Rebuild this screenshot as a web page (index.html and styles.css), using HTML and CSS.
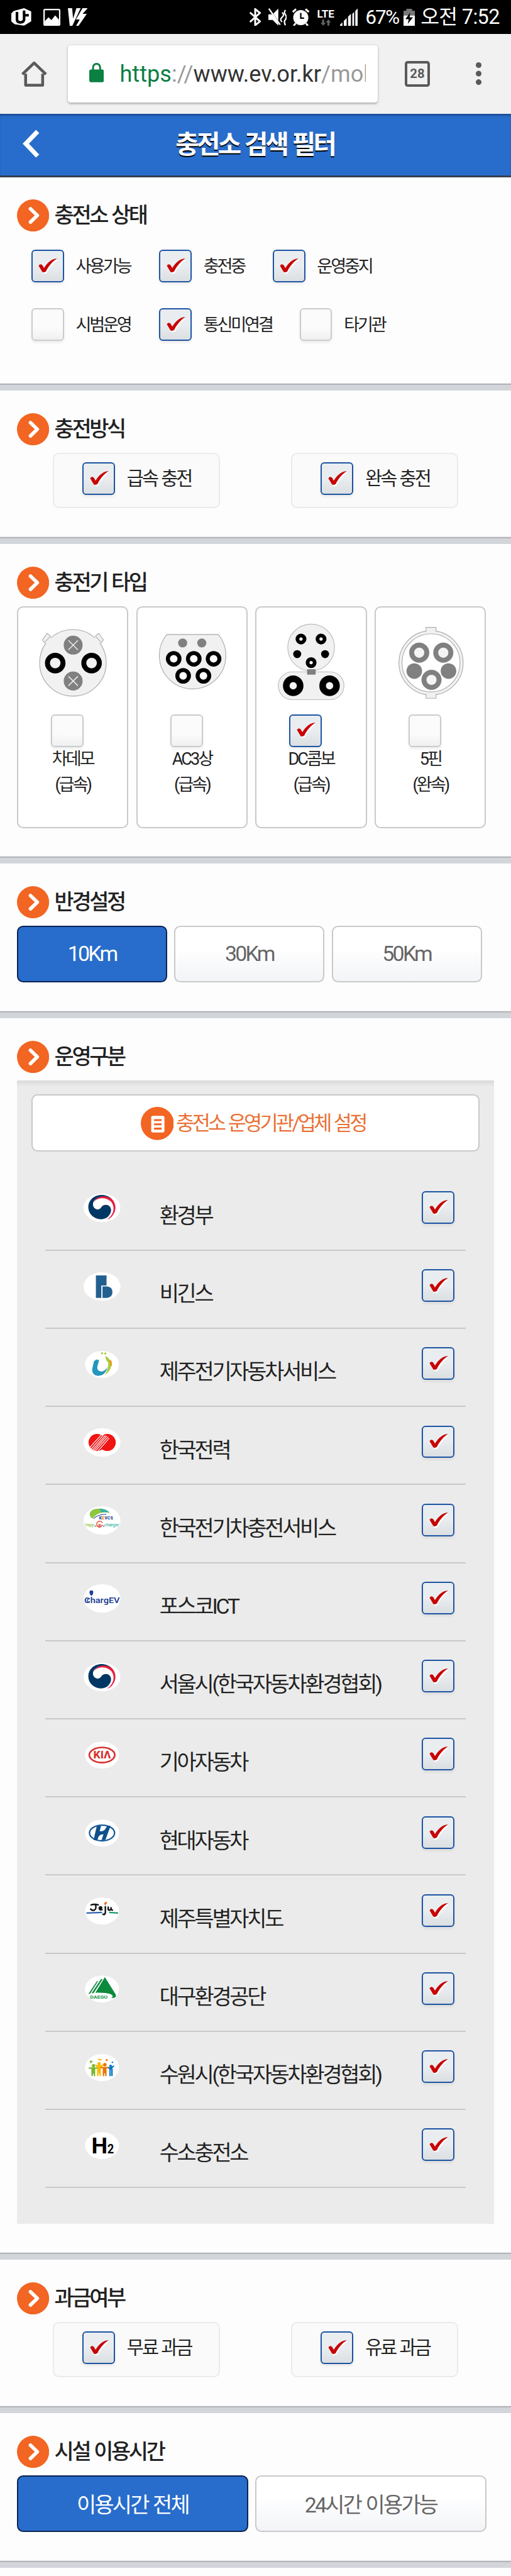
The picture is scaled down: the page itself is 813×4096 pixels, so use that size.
FILE: index.html
```html
<!DOCTYPE html>
<html lang="ko">
<head>
<meta charset="utf-8">
<title>충전소 검색 필터</title>
<link rel="stylesheet" href="styles.css">
</head>
<body>
<svg class="defs" width="0" height="0" aria-hidden="true">
  <symbol id="check" viewBox="0 0 69 69">
    <path fill="#fff" transform="translate(2 3)" d="M16.5 34q4-6 8-1l3.500 6C34 29 43 19.500 55.500 18.700 47 24 37 35 32 46q-6 3.500-8 .5z"/>
    <path fill="#c70505" d="M16.500 34q4-6 8-1l3.500 6C34 29 43 19.500 55.500 18.700 47 24 37 35 32 46q-6 3.500-8 .5z"/>
  </symbol>
  <symbol id="arrow" viewBox="0 0 68 68">
    <circle cx="34" cy="34" r="34" fill="#f26522"/>
    <path d="M28.500 20 43 34 28.500 48" fill="none" stroke="#fff" stroke-width="7.500" stroke-linecap="round" stroke-linejoin="round"/>
  </symbol>
  <symbol id="gov" viewBox="0 0 78 60">
    <ellipse cx="39" cy="30" rx="39" ry="30" fill="#fff"/>
    <path fill="#ea1d3d" d="M20 19C28 4 46 1 57 9c13 10 14 28 2 40q-4 4-9 5.500C64 45 68 27 57 16 46 6 28 8 20 19z"/>
    <path fill="#003764" d="M61 13C50 0 29-1 17 11 7 21 8 38 18 47c10 9 24 9 33 2 8-7 9-17 4-22-5-5-13-4-17 1-3 5-8 7-13 4-6-3-7-12-2-18C32 4 49 2 61 13z"/>
  </symbol>
</svg>

<header class="statusbar">
  <svg class="st-uplus" viewBox="0 0 44 38"><path fill="#fff" d="M5 6 27 0l15 7v21L27 37 7 34 0 28V11z"/><path fill="none" stroke="#000" stroke-width="5.500" d="M12 8v16q0 6 7 6t8-6V5M27 15h10"/></svg>
  <svg class="st-pic" viewBox="0 0 36 36"><rect x="1.500" y="1.500" width="33" height="33" rx="2" fill="none" stroke="#fff" stroke-width="3"/><path fill="#fff" d="M3 34V26l8-8 6 6 8-10 8 9v11z"/></svg>
  <svg class="st-v3" viewBox="0 0 42 38"><path fill="#fff" d="M0 0h9l2 22L18 0h9L9 38H4zM31 0h11L31 12h9L22 38h-5l8-14h-8z"/></svg>
  <span class="spacer"></span>
  <svg class="st-bt" viewBox="0 0 24 38"><path d="M1 9 22 28 12 36V2l10 8L1 29" fill="none" stroke="#fff" stroke-width="4"/></svg>
  <svg class="st-mute" viewBox="0 0 38 38"><path fill="#fff" d="M0 13h9L21 1v36L9 25H0z"/><path stroke="#000" stroke-width="3" d="M2 2 26 36"/><path d="m1 1 24 34M29 9q6 5 0 10t0 10M36 4q-4 5 0 10t0 10 0 12" fill="none" stroke="#fff" stroke-width="3"/></svg>
  <svg class="st-alarm" viewBox="0 0 36 38"><circle cx="18" cy="20" r="16" fill="#fff"/><path d="M18 10v11h7" fill="none" stroke="#000" stroke-width="3"/><path d="m1 8 7-6M35 8l-7-6M7 32l-4 5M29 32l4 5" stroke="#fff" stroke-width="4"/></svg>
  <span class="st-lte"><b>LTE</b><svg viewBox="0 0 22 13"><path fill="#666" d="M3.500 0h4v7H11l-5.500 6L0 7h3.500zM14.500 13h4V6H22l-5.500-6L11 6h3.500z"/></svg></span>
  <svg class="st-signal" viewBox="0 0 38 38"><path fill="#fff" d="M0 38v-3l5-5v8zM8 38V27l6-6v17zM17 38V18l6-6v26zM26 38V12L38 0v38z"/><path stroke="#000" stroke-width="2.500" d="M31 0v38"/></svg>
  <span class="st-pct">67%</span>
  <svg class="st-batt" viewBox="0 0 24 36"><path fill="#777" d="M6 0h12v4h6v10H0V4h6z"/><path fill="#fff" d="M0 14h24v22H0z"/><path fill="#000" d="M14 8 4 22h7l-2 10 11-14h-7z"/></svg>
  <span class="st-time">오전 7:52</span>
</header>

<nav class="chromebar">
  <svg class="home" viewBox="0 0 54 54"><path d="M9 27v24h36V27M2 28 27 4l25 24" fill="none" stroke="#5a5a5a" stroke-width="6" stroke-linejoin="round"/></svg>
  <div class="urlbox">
    <svg class="lock" viewBox="0 0 31 41"><path d="M8 17V9.500a7.500 7.500 0 0 1 15 0V17" fill="none" stroke="#0b8043" stroke-width="4"/><rect y="14" width="31" height="27" rx="4" fill="#0b8043"/></svg>
    <span class="url"><span class="secure">https</span>://<span class="host">www.ev.or.kr</span>/mob</span>
  </div>
  <span class="tabs">28</span>
  <svg class="more" viewBox="0 0 12 48"><g fill="#5a5a5a"><circle cx="6" cy="6" r="6"/><circle cx="6" cy="24" r="6"/><circle cx="6" cy="42" r="6"/></g></svg>
</nav>

<div class="titlebar">
  <svg class="back" viewBox="0 0 38 60"><path d="M33 4 8 30l25 26" fill="none" stroke="#fff" stroke-width="9.500"/></svg>
  <h1>충전소 검색 필터</h1>
</div>

<main>
  <section class="sec sec-status">
    <h2><svg><use href="#arrow"/></svg>충전소 상태</h2>
    <div class="checks">
      <label class="c1"><i class="cb on"><svg><use href="#check"/></svg></i>사용가능</label>
      <label class="c2"><i class="cb on"><svg><use href="#check"/></svg></i>충전중</label>
      <label><i class="cb on"><svg><use href="#check"/></svg></i>운영중지</label>
    </div>
    <div class="checks">
      <label class="c1"><i class="cb"></i>시범운영</label>
      <label class="c3"><i class="cb on"><svg><use href="#check"/></svg></i>통신미연결</label>
      <label><i class="cb"></i>타기관</label>
    </div>
  </section>

  <section class="sec sec-pair">
    <h2><svg><use href="#arrow"/></svg>충전방식</h2>
    <div class="pair">
      <label><i class="cb on"><svg><use href="#check"/></svg></i>급속 충전</label>
      <label><i class="cb on"><svg><use href="#check"/></svg></i>완속 충전</label>
    </div>
  </section>

  <section class="sec sec-type">
    <h2><svg><use href="#arrow"/></svg>충전기 타입</h2>
    <div class="cards">
      <div class="card">
        <svg class="plug" viewBox="0 -1 236 230">
          <g fill="#f1f1f1" stroke="#aaa" stroke-width="1.500">
            <path d="M58 76 54 70 64 56l7 6zM179 76l4-6-10-14-7 6z"/>
            <circle cx="118.500" cy="118.500" r="70.500"/><path stroke="none" d="m60 75 11-11 8 10-10 10zM177 75l-11-11-8 10 10 10z"/>
          </g>
          <g fill="#808080"><circle cx="119" cy="81" r="20"/><circle cx="119" cy="157" r="20"/></g>
          <path d="m109 71 20 20m0-20-20 20m0 56 20 20m0-20-20 20" stroke="#eee" stroke-width="2"/>
          <g fill="none" stroke="#000" stroke-width="10.500"><circle cx="81" cy="119" r="16.500"/><circle cx="158" cy="119" r="16.500"/></g>
        </svg>
        <i class="cb"></i><p>차데모<br>(급속)</p>
      </div>
      <div class="card">
        <svg class="plug" viewBox="0 -1 236 230">
          <path d="M64.500 58.500h109a70.500 70.500 0 1 1-109 0z" fill="#f1f1f1" stroke="#aaa" stroke-width="1.500"/>
          <g fill="#808080"><circle cx="98" cy="76.500" r="9.600"/><circle cx="138.500" cy="76.500" r="9.600"/></g>
          <g fill="#fff" stroke="#000" stroke-width="8.500"><circle cx="79" cy="110" r="12.300"/><circle cx="121.500" cy="110" r="12.300"/><circle cx="163.500" cy="110" r="12.300"/><circle cx="99" cy="146" r="12.300"/><circle cx="142" cy="146" r="12.300"/></g>
        </svg>
        <i class="cb"></i><p>AC3상<br>(급속)</p>
      </div>
      <div class="card">
        <svg class="plug" viewBox="0 -1 236 230">
          <g fill="#f1f1f1" stroke="#bbb" stroke-width="1.500"><circle cx="118.500" cy="86" r="49.500"/><rect x="49" y="137.500" width="139" height="59" rx="29"/></g>
          <rect x="110" y="132" width="18" height="11.500" fill="#808080"/>
          <g fill="#fff" stroke="#000" stroke-width="8"><circle cx="97" cy="68" r="7.500"/><circle cx="139.500" cy="68" r="7.500"/><circle cx="118.500" cy="118" r="7.500"/></g>
          <circle cx="89" cy="100" r="8.500"/><circle cx="148" cy="100" r="8.500"/>
          <g fill="#f4f4f4" stroke="#000" stroke-width="14"><circle cx="80.500" cy="167" r="14.700"/><circle cx="157.500" cy="167" r="14.700"/></g>
        </svg>
        <i class="cb on"><svg><use href="#check"/></svg></i><p>DC콤보<br>(급속)</p>
      </div>
      <div class="card">
        <svg class="plug" viewBox="0 -1 236 230">
          <g fill="#f1f1f1" stroke="#aaa" stroke-width="1.500"><path d="M109 43.500h21v150h-21z"/><circle cx="119.500" cy="118.500" r="68"/><path stroke="none" d="M110 45h19v10h-19zM110 182h19v10h-19z"/><circle cx="119.500" cy="118.500" r="61.500" fill="#fff"/></g>
          <g fill="#f4f4f4" stroke="#808080" stroke-width="10.500"><circle cx="94.500" cy="97" r="16"/><circle cx="145.500" cy="97" r="16"/><circle cx="120.500" cy="154.500" r="16"/></g>
          <g fill="#808080"><circle cx="84" cy="136" r="16.500"/><circle cx="156.500" cy="136" r="16.500"/></g>
        </svg>
        <i class="cb"></i><p>5핀<br>(완속)</p>
      </div>
    </div>
  </section>

  <section class="sec sec-choice">
    <h2><svg><use href="#arrow"/></svg>반경설정</h2>
    <div class="btns three"><button class="on">10Km</button><button>30Km</button><button>50Km</button></div>
  </section>

  <section class="sec sec-op">
    <h2><svg><use href="#arrow"/></svg>운영구분</h2>
    <div class="panel">
      <div class="orgbtn"><svg viewBox="0 0 70 70"><circle cx="35" cy="35" r="35" fill="#f26522"/><rect x="22" y="19" width="28" height="35" rx="3.500" fill="#fff"/><path d="M28 28h16M28 37h16M28 46h16" stroke="#f26522" stroke-width="4"/></svg>충전소 운영기관/업체 설정</div>
      <ul class="orgs">
        <li><svg class="logo"><use href="#gov"/></svg><span>환경부</span><i class="cb on"><svg><use href="#check"/></svg></i></li>
        <li><svg class="logo" viewBox="0 0 78 60"><ellipse cx="39" cy="30" rx="39" ry="30" fill="#fff"/><path fill="#235f8f" d="M26 6.500h22.500v21.500h-11v26H26zM40 30h10q11 1.500 11 12T50 54H40z"/></svg><span>비긴스</span><i class="cb on"><svg><use href="#check"/></svg></i></li>
        <li><svg class="logo" viewBox="0 0 78 60"><ellipse cx="39" cy="30" rx="36" ry="28.500" fill="#fff"/><path fill="#2596be" d="m22 23 6-4 1 2 4-1-2 8c-4 10-2 16 6 17 6 0 10-4 13-9-2 12-10 18-19 18-10 0-15-8-12-18z"/><path fill="#a5cd39" d="M46 13q5 0 7 5l3 3q5 7 1 17-4 9-12 14c5-8 8-20 7-27-2-1-5-4-6-12z"/><path fill="#f7941d" d="m55 19 4 4q2 6 0 12l-3-7z"/><circle cx="39" cy="6.500" r="2.200" fill="#a5cd39"/><circle cx="46" cy="7" r="2.200" fill="#a5cd39"/></svg><span>제주전기자동차서비스</span><i class="cb on"><svg><use href="#check"/></svg></i></li>
        <li><svg class="logo" viewBox="0 0 78 60"><ellipse cx="39" cy="30" rx="39" ry="30" fill="#fff"/><circle cx="28.500" cy="30" r="18" fill="#f01414"/><circle cx="50" cy="30" r="18" fill="#f01414"/><path d="m11 43 27-30m-24 33 28-32m-25 34 29-33m-26 34 29-33m-25 33 28-31m-23 32 25-29" stroke="#fff" stroke-width="1.500"/></svg><span>한국전력</span><i class="cb on"><svg><use href="#check"/></svg></i></li>
        <li><svg class="logo" viewBox="0 0 78 60"><ellipse cx="39" cy="30" rx="39" ry="30" fill="#fff"/><path fill="#8dc63f" d="M19 26C9 20 12 9 24 6c12-3 26 0 31 8-14-3-27 0-36 12z"/><path fill="#36b3a8" d="M34 5q15 1 21 9-10-3-18-1z"/><path d="M21 26q10-9 27-9" fill="none" stroke="#1c3f94" stroke-width="1.500"/><text x="33" y="28" font-size="8.500" font-weight="900" fill="#1c3f94" textLength="29">K<tspan fill="#f58220">E</tspan>VCS</text><text x="3.500" y="42" font-size="10" fill="#8dc63f" textLength="20">happ</text><text x="44" y="42" font-size="10" fill="#1ba99c" textLength="31">charger</text><text x="31" y="44" font-size="11" font-weight="700" fill="#e8432e">e</text><path d="M40 39q-4 8-10 4-5-5 0-10 6-4 10 2" fill="none" stroke="#e8432e" stroke-width="1.800"/><circle cx="25.500" cy="42" r="1.200" fill="#1c3f94"/><circle cx="42.500" cy="42" r="1.200" fill="#1c3f94"/></svg><span>한국전기차충전서비스</span><i class="cb on"><svg><use href="#check"/></svg></i></li>
        <li><svg class="logo" viewBox="0 0 78 60"><ellipse cx="39" cy="30" rx="39" ry="30" fill="#fff"/><path fill="#1c3f94" d="M12.500 17a4 4 0 1 1 8 0q0 4-3 7h-2q-3-3-3-7z"/><text x="1.500" y="40.500" font-size="18" font-weight="600" fill="#1c3f94" textLength="75" lengthAdjust="spacingAndGlyphs">ChargEV</text><path d="M13 31q-5-1-5 3.500t5 3.500" fill="none" stroke="#1c3f94" stroke-width="2"/></svg><span>포스코ICT</span><i class="cb on"><svg><use href="#check"/></svg></i></li>
        <li><svg class="logo"><use href="#gov"/></svg><span>서울시(한국자동차환경협회)</span><i class="cb on"><svg><use href="#check"/></svg></i></li>
        <li><svg class="logo" viewBox="0 0 78 60"><ellipse cx="39" cy="30" rx="36" ry="28.500" fill="#fff"/><ellipse cx="39" cy="30" rx="27" ry="16" fill="#fff" stroke="#d8322f" stroke-width="3.500"/><text x="20.500" y="37.500" font-size="21" font-weight="800" fill="#d8322f" textLength="37" lengthAdjust="spacingAndGlyphs">KIΛ</text></svg><span>기아자동차</span><i class="cb on"><svg><use href="#check"/></svg></i></li>
        <li><svg class="logo" viewBox="0 0 78 60"><ellipse cx="39" cy="30" rx="36" ry="28.500" fill="#fff"/><ellipse cx="39" cy="30" rx="26.500" ry="16.500" fill="#fff" stroke="#155a9a" stroke-width="3"/><path fill="#0f4f8e" d="M28 15h9l-3 11q6 2 11-3l5-8h7L46 45h-8l4-12q-6-1-10 4l-3 8h-8z"/></svg><span>현대자동차</span><i class="cb on"><svg><use href="#check"/></svg></i></li>
        <li><svg class="logo" viewBox="0 0 78 60"><ellipse cx="39" cy="30" rx="36" ry="28.500" fill="#fff"/><path fill="none" stroke="#111" stroke-width="3.200" stroke-linecap="round" d="M16 17q7-2 15 0M25 17q3 8-2 11-5 2-8-2M33 25q6 0 5-3-4-2-5 2 0 5 6 3M46 21v13q-1 4-5 3M52 22v5q3 3 6-1v-4 5l3 1"/><path fill="#f26522" d="m43 15 2-3 4-2v4l-3 4z"/><path d="M6 34.500 39 33" stroke="#2f62ae" stroke-width="3"/><path d="m54 33 19 1.500" stroke="#1a9a6c" stroke-width="3"/></svg><span>제주특별자치도</span><i class="cb on"><svg><use href="#check"/></svg></i></li>
        <li><svg class="logo" viewBox="0 0 78 60"><ellipse cx="39" cy="30" rx="36" ry="28.500" fill="#fff"/><path fill="#0c8a3e" d="M10 41 28 14l3-1-17 27zM17 39 37 9l3 1-19 29zM25 38 45 5l23 37q2 8-9 7 6-4-2-8-12-4-32-3z"/><text x="13.500" y="50" font-size="10.500" font-weight="800" fill="#2f9e58" textLength="37" lengthAdjust="spacingAndGlyphs">DAEGU</text></svg><span>대구환경공단</span><i class="cb on"><svg><use href="#check"/></svg></i></li>
        <li><svg class="logo" viewBox="0 0 78 60"><ellipse cx="39" cy="30" rx="36" ry="28.500" fill="#fff"/><g stroke-width="3" stroke-linecap="round"><g fill="#76b82a" stroke="#76b82a"><circle cx="21" cy="26" r="2"/><path d="M12 31h17M18 32v15M23 32v15M20 32v10"/></g><g fill="#fbba00" stroke="#fbba00"><circle cx="33" cy="22" r="2.200"/><path d="m26 25 5 5h4l5-5M30 31v16M35 31v16M32 31v10"/></g><g fill="#ee7203" stroke="#ee7203"><circle cx="45" cy="24" r="2.200"/><path d="M37 30h16M42 30v17M47 30v17M44 31v10"/></g><g fill="#0077c8" stroke="#0077c8"><circle cx="57" cy="27" r="1.500"/><path d="m53 31 4 2 6-6M56 33v14M60 33v14"/></g></g><path fill="#76b82a" d="m13 15 3 1 3-1-1 4-4 2z"/><path fill="#fbba00" d="m30 11 4 1 4 0v3l-7-1z"/><path fill="#ee7203" d="m46 13 3-1 3 2-3 3z"/><path fill="#0077c8" d="m58 19 5-2-1 4z"/></svg><span>수원시(한국자동차환경협회)</span><i class="cb on"><svg><use href="#check"/></svg></i></li>
        <li><svg class="logo" viewBox="0 0 78 60"><ellipse cx="39" cy="30" rx="36" ry="28.500" fill="#fff"/><text x="16.500" y="47" font-size="46" font-weight="700" textLength="34" lengthAdjust="spacingAndGlyphs">H</text><text x="50" y="47" font-size="27" font-weight="700" textLength="14" lengthAdjust="spacingAndGlyphs">2</text></svg><span>수소충전소</span><i class="cb on"><svg><use href="#check"/></svg></i></li>
      </ul>
    </div>
  </section>

  <section class="sec sec-pair">
    <h2><svg><use href="#arrow"/></svg>과금여부</h2>
    <div class="pair">
      <label><i class="cb on"><svg><use href="#check"/></svg></i>무료 과금</label>
      <label><i class="cb on"><svg><use href="#check"/></svg></i>유료 과금</label>
    </div>
  </section>

  <section class="sec sec-choice">
    <h2><svg><use href="#arrow"/></svg>시설 이용시간</h2>
    <div class="btns two"><button class="on">이용시간 전체</button><button>24시간 이용가능</button></div>
  </section>
</main>
</body>
</html>
```
FILE: styles.css
```css
/* 1rem is a hundred design pixels of the 1080-wide layout */
html { font-size: 75.28px; }
* { box-sizing: border-box; }
body {
  margin: 0;
  width: 10.8rem;
  height: 54.41rem;
  overflow: hidden;
  background: #fdfdfe;
  color: #222;
  font-family: Roboto, "Noto Sans CJK KR", sans-serif;
  font-size: .36rem;
  word-spacing: .07em;
}
.defs { position: absolute; }
svg { display: block; flex: none; }
h1, h2, p, ul { margin: 0; padding: 0; font-weight: 400; }

.statusbar {
  display: flex;
  align-items: center;
  height: .72rem;
  padding: 0 .23rem 0 .24rem;
  background: #000;
  color: #fff;
}
.spacer { flex: 1; }
.st-uplus { width: .44rem; height: .38rem; margin-right: .24rem; }
.st-pic { width: .36rem; height: .36rem; margin-right: .15rem; }
.st-v3 { width: .42rem; height: .38rem; }
.st-bt { width: .24rem; height: .38rem; margin-right: .16rem; }
.st-mute { width: .38rem; height: .38rem; margin-right: .13rem; }
.st-alarm { width: .36rem; height: .38rem; margin-right: .16rem; }
.st-lte { width: .39rem; margin-right: .09rem; font-size: .225rem; line-height: .22rem; }
.st-lte svg { width: .22rem; height: .13rem; margin: .01rem 0 0 .08rem; }
.st-signal { width: .38rem; height: .38rem; margin-right: .16rem; }
.st-pct { width: .81rem; font-size: .42rem; letter-spacing: -.06em; white-space: nowrap; }
.st-batt { width: .24rem; height: .36rem; margin-right: .12rem; }
.st-time { width: 1.68rem; font-size: .43rem; letter-spacing: -.02em; word-spacing: 0; white-space: nowrap; line-height: .6rem; }

.chromebar {
  display: flex;
  align-items: center;
  height: 1.68rem;
  background: #f1f1f1;
  padding-left: .45rem;
}
.home { width: .54rem; height: .54rem; }
.urlbox {
  display: flex;
  align-items: center;
  width: 6.55rem;
  height: 1.2rem;
  margin-left: .45rem;
  padding-left: .44rem;
  background: #fff;
  border-radius: .06rem;
  box-shadow: 0 .02rem .05rem rgba(0,0,0,.3);
}
.lock { width: .31rem; height: .41rem; margin: -.06rem .34rem 0 0; }
.url { width: 5.2rem; overflow: hidden; font-size: .48rem; white-space: nowrap; color: #999; }
.secure { color: #0b8043; }
.host { color: #333; }
.tabs {
  width: .54rem;
  height: .54rem;
  margin-left: .56rem;
  border: .055rem solid #5a5a5a;
  border-radius: .06rem;
  color: #5a5a5a;
  font: 700 .27rem/.43rem Roboto, sans-serif;
  text-align: center;
}
.more { width: .12rem; height: .48rem; margin-left: .96rem; }

.titlebar {
  display: flex;
  align-items: center;
  height: 1.35rem;
  padding-left: .47rem;
  background: #286dcb;
  border-bottom: .05rem solid #39404f;
  box-shadow: inset 0 .05rem .05rem -.02rem rgba(0,0,40,.4);
}
.back { width: .38rem; height: .6rem; margin-top: -.05rem; }
h1 {
  flex: 1;
  margin-right: .87rem;
  color: #fff;
  font-size: .54rem;
  font-weight: 700;
  line-height: .8rem;
  letter-spacing: -.09em;
  text-align: center;
  text-shadow: 0 .03rem 0 #000;
}

.sec { border-bottom: .12rem solid #d2d5da; padding: .48rem .36rem 0; box-shadow: inset 0 -.03rem 0 #b3b5b9; }
h2 {
  display: flex;
  align-items: center;
  height: .68rem;
  font-size: .45rem;
  font-weight: 500;
  line-height: .68rem;
  letter-spacing: -.098em;
}
h2 svg { width: .68rem; height: .68rem; margin-right: .11rem; }

.cb {
  display: block;
  flex: none;
  width: .69rem;
  height: .69rem;
  border: .03rem solid #c9cccd;
  border-radius: .08rem;
  background: linear-gradient(#fbfbfb 60%, #f0f0f0);
  box-shadow: 0 .03rem .06rem rgba(0,0,0,.07);
}
.cb svg { width: .69rem; height: .69rem; margin: -.03rem; }
.cb.on { border-color: #1e55a3; background: linear-gradient(#e9edf0 50%, #dbdfe2); }

.sec-status { height: 4.5rem; padding-top: .46rem; }
.checks { display: flex; height: 1.23rem; padding-left: .3rem; }
h2 + .checks { margin-top: .39rem; }
.checks label { display: flex; height: .69rem; line-height: .72rem; letter-spacing: -.115em; white-space: nowrap; }
.checks .cb { margin-right: .25rem; }
.checks .c1 { width: 2.7rem; }
.checks .c2 { width: 2.4rem; }
.checks .c3 { width: 2.97rem; }

.sec-pair { height: 3.24rem; }
.pair { display: flex; gap: 1.51rem; margin: .15rem 0 0 .755rem; }
.pair label {
  display: flex;
  width: 3.53rem;
  height: 1.17rem;
  padding: .18rem 0 0 .6rem;
  border: .03rem solid #ebebeb;
  border-radius: .13rem;
  background: #fafafa;
  font-size: .39rem;
  line-height: .71rem;
  letter-spacing: -.1em;
  white-space: nowrap;
}
.pair .cb { margin-right: .25rem; }

.sec-type { height: 6.75rem; }
.cards { display: flex; gap: .165rem; margin-top: .16rem; }
.card { width: 2.355rem; height: 4.68rem; border: .03rem solid #c9c9c9; border-radius: .13rem; background: #fff; }
.plug { width: 2.355rem; height: 2.3rem; margin: -.03rem; }
.card .cb { margin: .01rem 0 0 .69rem; }
.card p { margin-top: -.01rem; line-height: .54rem; letter-spacing: -.11em; text-align: center; }

.sec-choice { height: 3.27rem; }
.btns { display: flex; gap: .15rem; margin-top: .15rem; }
button {
  height: 1.2rem;
  padding: 0;
  border: .03rem solid #c9c9c9;
  border-radius: .13rem;
  background: linear-gradient(#fff 40%, #f2f4f7);
  color: #666;
  font: 400 .45rem Roboto, "Noto Sans CJK KR", sans-serif;
  letter-spacing: -.08em;
  word-spacing: .05em;
}
button.on { border-color: #0c2350; background: #286dcb; color: #fff; }
.three button { width: 3.175rem; }
.two button { width: 4.885rem; }

.sec-op { height: 26.22rem; }
.panel {
  width: 10.08rem;
  height: 24.15rem;
  margin-top: .15rem;
  padding: .3rem .3rem 0;
  background: linear-gradient(#d9d9d9, #ebebeb .13rem);
}
.orgbtn {
  display: flex;
  align-items: center;
  justify-content: center;
  height: 1.2rem;
  padding: 0 .1rem .06rem 0;
  border: .03rem solid #c9c9c9;
  border-radius: .13rem;
  background: #fff;
  color: #ea7136;
  font-size: .42rem;
  letter-spacing: -.115em;
}
.orgbtn svg { width: .7rem; height: .7rem; margin: .09rem .05rem 0 0; }
.orgs { margin: .45rem .3rem 0; list-style: none; }
.orgs li {
  display: flex;
  height: 1.65rem;
  padding: .39rem .24rem 0 .81rem;
  border-bottom: .03rem solid #c9c9c9;
}
.logo { width: .78rem; height: .6rem; margin-top: .06rem; font-family: Roboto, sans-serif; }
.orgs span { flex: 1; margin: .2rem 0 0 .82rem; font-size: .45rem; line-height: .66rem; letter-spacing: -.095em; white-space: nowrap; }
```
